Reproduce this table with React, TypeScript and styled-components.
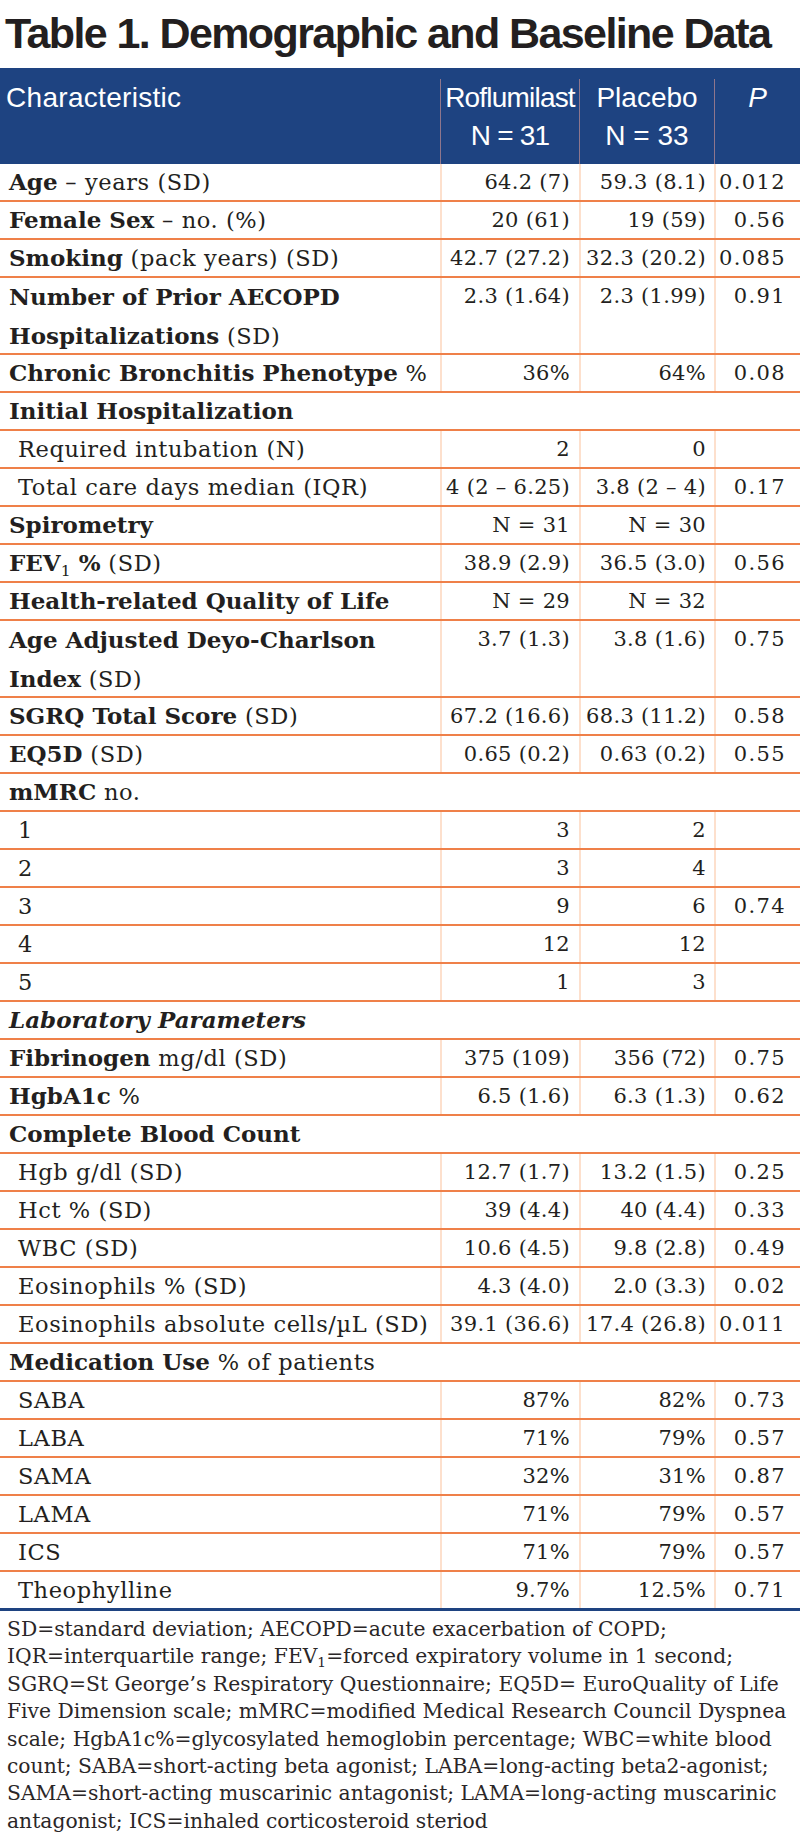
import React from 'react';
import styled, { createGlobalStyle } from 'styled-components';

const GlobalStyle = createGlobalStyle`
  *, *::before, *::after { box-sizing: border-box; }
  html, body { margin: 0; padding: 0; background: #ffffff; }
`;

const COLS = '440px 139px 135px 86px';
const BLUE = '#1e4381';
const ORANGE = '#ef8049';

const Page = styled.div`
  width: 800px;
  height: 1838px;
  background: #ffffff;
  color: #231f20;
  overflow: hidden;
`;

const Title = styled.h1`
  margin: 0;
  padding: 10px 0 12px 5px;
  height: 68px;
  font: 700 43px/46px "Liberation Sans", Arial, sans-serif;
  letter-spacing: -1.6px;
  color: #231f20;
  white-space: nowrap;
`;

const HeadRow = styled.div`
  display: grid;
  grid-template-columns: ${COLS};
  height: 96px;
  background: ${BLUE};
  padding-top: 11px;
  font: 400 28px/38px "Liberation Sans", Arial, sans-serif;
  color: #ffffff;
`;

const HeadCell = styled.div<{ $first?: boolean; $italic?: boolean; $track?: number }>`
  padding: ${(p) => (p.$first ? '0 0 0 6px' : '0')};
  text-align: ${(p) => (p.$first ? 'left' : 'center')};
  border-left: ${(p) => (p.$first ? 'none' : '1px solid rgba(236, 160, 150, 0.55)')};
  font-style: ${(p) => (p.$italic ? 'italic' : 'normal')};
  letter-spacing: ${(p) => p.$track ?? 0}px;
  white-space: nowrap;
`;

const Row = styled.div<{ $last?: boolean; $tall?: boolean }>`
  display: grid;
  grid-template-columns: ${COLS};
  grid-template-rows: ${(p) => (p.$tall ? '75px' : '36px')};
  border-bottom: ${(p) => (p.$last ? `3px solid ${BLUE}` : `2px solid ${ORANGE}`)};
`;

const Label = styled.div<{ $indent?: boolean; $tall?: boolean; $span?: boolean }>`
  grid-column: ${(p) => (p.$span ? '1 / -1' : 'auto')};
  padding-left: ${(p) => (p.$indent ? '18px' : '9px')};
  font: 400 22.5px/${(p) => (p.$tall ? '37.5px' : '36px')} "DejaVu Serif", serif;
  letter-spacing: 0.6px;
  white-space: nowrap;
  overflow: visible;
`;

const Strong = styled.b`
  font-weight: 700;
  font-size: 23px;
  letter-spacing: 0;
`;

const StrongItalic = styled(Strong)`
  font-style: italic;
`;

const Sub = styled.sub`
  font-size: 0.68em;
  font-weight: 400;
  vertical-align: -0.3em;
  line-height: 0;
`;

const Value = styled.div<{ $pad: number; $track?: number }>`
  border-left: 2px solid #fde0cd;
  padding-right: ${(p) => p.$pad}px;
  text-align: right;
  font: 400 21px/36px "DejaVu Serif", serif;
  letter-spacing: ${(p) => p.$track ?? 0.3}px;
  white-space: nowrap;
`;

const Note = styled.p`
  margin: 0;
  padding: 5px 0 0 7px;
  font: 400 20.3px/27.4px "DejaVu Serif", serif;
  color: #2a2627;
  white-space: nowrap;
`;

type RowData = {
  label: React.ReactNode;
  values?: [string, string, string];
  indent?: boolean;
  tall?: boolean;
};

const rows: RowData[] = [
  { label: <><Strong>Age</Strong> – years (SD)</>, values: ['64.2 (7)', '59.3 (8.1)', '0.012'] },
  { label: <><Strong>Female Sex</Strong> – no. (%)</>, values: ['20 (61)', '19 (59)', '0.56'] },
  { label: <><Strong>Smoking</Strong> (pack years) (SD)</>, values: ['42.7 (27.2)', '32.3 (20.2)', '0.085'] },
  {
    label: <><Strong>Number of Prior AECOPD</Strong><br /><Strong>Hospitalizations</Strong> (SD)</>,
    values: ['2.3 (1.64)', '2.3 (1.99)', '0.91'],
    tall: true,
  },
  { label: <><Strong>Chronic Bronchitis Phenotype</Strong> %</>, values: ['36%', '64%', '0.08'] },
  { label: <Strong>Initial Hospitalization</Strong> },
  { label: 'Required intubation (N)', values: ['2', '0', ''], indent: true },
  { label: 'Total care days median (IQR)', values: ['4 (2 – 6.25)', '3.8 (2 – 4)', '0.17'], indent: true },
  { label: <Strong>Spirometry</Strong>, values: ['N = 31', 'N = 30', ''] },
  { label: <><Strong>FEV<Sub>1</Sub> %</Strong> (SD)</>, values: ['38.9 (2.9)', '36.5 (3.0)', '0.56'] },
  { label: <Strong>Health-related Quality of Life</Strong>, values: ['N = 29', 'N = 32', ''] },
  {
    label: <><Strong>Age Adjusted Deyo-Charlson</Strong><br /><Strong>Index</Strong> (SD)</>,
    values: ['3.7 (1.3)', '3.8 (1.6)', '0.75'],
    tall: true,
  },
  { label: <><Strong>SGRQ Total Score</Strong> (SD)</>, values: ['67.2 (16.6)', '68.3 (11.2)', '0.58'] },
  { label: <><Strong>EQ5D</Strong> (SD)</>, values: ['0.65 (0.2)', '0.63 (0.2)', '0.55'] },
  { label: <><Strong>mMRC</Strong> no.</> },
  { label: '1', values: ['3', '2', ''], indent: true },
  { label: '2', values: ['3', '4', ''], indent: true },
  { label: '3', values: ['9', '6', '0.74'], indent: true },
  { label: '4', values: ['12', '12', ''], indent: true },
  { label: '5', values: ['1', '3', ''], indent: true },
  { label: <StrongItalic>Laboratory Parameters</StrongItalic> },
  { label: <><Strong>Fibrinogen</Strong> mg/dl (SD)</>, values: ['375 (109)', '356 (72)', '0.75'] },
  { label: <><Strong>HgbA1c</Strong> %</>, values: ['6.5 (1.6)', '6.3 (1.3)', '0.62'] },
  { label: <Strong>Complete Blood Count</Strong> },
  { label: 'Hgb g/dl (SD)', values: ['12.7 (1.7)', '13.2 (1.5)', '0.25'], indent: true },
  { label: 'Hct % (SD)', values: ['39 (4.4)', '40 (4.4)', '0.33'], indent: true },
  { label: 'WBC (SD)', values: ['10.6 (4.5)', '9.8 (2.8)', '0.49'], indent: true },
  { label: 'Eosinophils % (SD)', values: ['4.3 (4.0)', '2.0 (3.3)', '0.02'], indent: true },
  { label: 'Eosinophils absolute cells/µL (SD)', values: ['39.1 (36.6)', '17.4 (26.8)', '0.011'], indent: true },
  { label: <><Strong>Medication Use</Strong> % of patients</> },
  { label: 'SABA', values: ['87%', '82%', '0.73'], indent: true },
  { label: 'LABA', values: ['71%', '79%', '0.57'], indent: true },
  { label: 'SAMA', values: ['32%', '31%', '0.87'], indent: true },
  { label: 'LAMA', values: ['71%', '79%', '0.57'], indent: true },
  { label: 'ICS', values: ['71%', '79%', '0.57'], indent: true },
  { label: 'Theophylline', values: ['9.7%', '12.5%', '0.71'], indent: true },
];

const noteLines: React.ReactNode[] = [
  'SD=standard deviation; AECOPD=acute exacerbation of COPD;',
  <>IQR=interquartile range; FEV<Sub>1</Sub>=forced expiratory volume in 1 second;</>,
  'SGRQ=St George’s Respiratory Questionnaire; EQ5D= EuroQuality of Life',
  'Five Dimension scale; mMRC=modified Medical Research Council Dyspnea',
  'scale; HgbA1c%=glycosylated hemoglobin percentage; WBC=white blood',
  'count; SABA=short-acting beta agonist; LABA=long-acting beta2-agonist;',
  'SAMA=short-acting muscarinic antagonist; LAMA=long-acting muscarinic',
  'antagonist; ICS=inhaled corticosteroid steriod',
];

export default function App() {
  return (
    <Page>
      <GlobalStyle />
      <Title>Table 1. Demographic and Baseline Data</Title>
      <HeadRow>
        <HeadCell $first $track={0.3}>Characteristic</HeadCell>
        <HeadCell $track={-0.8}>Roflumilast<br />N = 31</HeadCell>
        <HeadCell>Placebo<br />N = 33</HeadCell>
        <HeadCell $italic>P</HeadCell>
      </HeadRow>
      {rows.map((r, i) => (
        <Row key={i} $last={i === rows.length - 1} $tall={r.tall}>
          <Label $indent={r.indent} $tall={r.tall} $span={!r.values}>
            {r.label}
          </Label>
          {r.values && (
            <>
              <Value $pad={9}>{r.values[0]}</Value>
              <Value $pad={8}>{r.values[1]}</Value>
              <Value $pad={14} $track={1.4}>{r.values[2]}</Value>
            </>
          )}
        </Row>
      ))}
      <Note>
        {noteLines.map((l, i) => (
          <React.Fragment key={i}>
            {l}
            {i < noteLines.length - 1 && <br />}
          </React.Fragment>
        ))}
      </Note>
    </Page>
  );
}
